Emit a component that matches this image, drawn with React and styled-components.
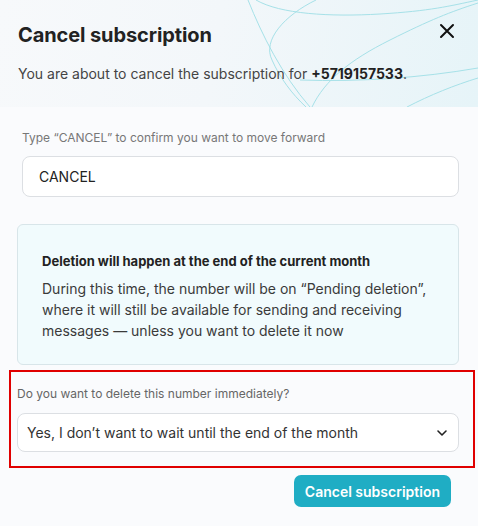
import React, { useState } from 'react'
import styled, { createGlobalStyle } from 'styled-components'

const GlobalStyle = createGlobalStyle`
	html, body {
		margin: 0;
		padding: 0;
		background: #fafbfd;
	}
	body {
		font-family: Inter, "Noto Sans", "Liberation Sans", sans-serif;
		color: #222;
	}
`

const Modal = styled.div`
	width: 478px;
	min-height: 526px;
	background: #fafbfd;
	display: flex;
	flex-direction: column;
`

const Header = styled.header`
	position: relative;
	height: 107px;
	box-sizing: border-box;
	padding: 21px 18px 0 18px;
	background: linear-gradient(100deg, #f7f9fb 0%, #f3f7fa 45%, #e6f4f8 100%);
	overflow: hidden;
`

const Waves = styled.svg`
	position: absolute;
	inset: 0;
	pointer-events: none;
`

const TitleRow = styled.div`
	position: relative;
	display: flex;
	justify-content: space-between;
	align-items: flex-start;
`

const Title = styled.h2`
	margin: 0;
	font-size: 20px;
	font-weight: 700;
	line-height: 28px;
	color: #222;
	letter-spacing: -0.1px;
`

const CloseButton = styled.button`
	border: 0;
	background: transparent;
	padding: 0;
	margin: 0 3px 0 0;
	width: 20px;
	height: 20px;
	cursor: pointer;
	display: flex;
	align-items: center;
	justify-content: center;
`

const Subtitle = styled.p`
	position: relative;
	margin: 15px 0 0 0;
	font-size: 14px;
	line-height: 20px;
	color: #444;

	strong {
		color: #222;
		font-weight: 700;
	}
`

const Body = styled.div`
	display: flex;
	flex-direction: column;
	padding: 23px 19px 0 17px;
`

const Field = styled.div`
	display: flex;
	flex-direction: column;
	gap: ${(p) => p.gap || 10}px;
	padding-left: ${(p) => p.indent || 0}px;
`

const Label = styled.label`
	font-size: 12px;
	line-height: 16px;
	color: ${(p) => p.tone || '#777'};
`

const TextInput = styled.input`
	box-sizing: border-box;
	height: 41px;
	width: 100%;
	border: 1px solid #dcdfe3;
	border-radius: 8px;
	background: #fff;
	padding: 0 16px;
	font-family: inherit;
	font-size: 14px;
	color: #222;
	outline: none;
`

const InfoBox = styled.div`
	margin-top: 27px;
	box-sizing: border-box;
	height: 141px;
	border: 1px solid #d8e5e9;
	border-radius: 6px;
	background: #f1fbfd;
	padding: 27px 24px 0 24px;
`

const InfoTitle = styled.h4`
	margin: 0 0 8px 0;
	font-size: 13px;
	line-height: 18px;
	font-weight: 700;
	color: #222;
`

const InfoText = styled.p`
	margin: 0;
	font-size: 14px;
	line-height: 21px;
	color: #3a3a3a;
`

const Highlight = styled.section`
	margin: 5px -16px 0 -8px;
	border: 2px solid #e00000;
	padding: 14px 14px 14px 6px;
	display: flex;
	flex-direction: column;
	gap: 11px;
`

const SelectWrap = styled.div`
	position: relative;
`

const Select = styled.select`
	appearance: none;
	box-sizing: border-box;
	width: 100%;
	height: 39px;
	border: 1px solid #dcdfe3;
	border-radius: 8px;
	background: #fff;
	padding: 0 36px 0 9px;
	font-family: inherit;
	font-size: 14px;
	color: #333;
	outline: none;
`

const Chevron = styled.svg`
	position: absolute;
	right: 11px;
	top: 50%;
	transform: translateY(-50%);
	pointer-events: none;
`

const Footer = styled.div`
	display: flex;
	justify-content: flex-end;
	padding: 7px 8px 0 0;
`

const PrimaryButton = styled.button`
	height: 32px;
	padding: 0 11px;
	border: 0;
	border-radius: 7px;
	background: #1fadc4;
	color: #fff;
	font-family: inherit;
	font-size: 14px;
	font-weight: 600;
	cursor: pointer;
`

export default function App() {
	const [confirm, setConfirm] = useState('CANCEL')
	const [now, setNow] = useState('yes')

	return (
		<>
			<GlobalStyle />
			<Modal>
				<Header>
					<Waves width="478" height="107" viewBox="0 0 478 107">
						<g fill="none" stroke="#a6e1e8" strokeWidth="1">
							<path d="M248 0 C 262 35, 282 75, 310 107" />
							<path d="M256 0 C 280 14, 330 17, 380 14 S 450 6, 478 0" />
							<path d="M316 0 C 285 15, 262 40, 272 60 C 280 78, 292 94, 306 107" />
							<path d="M312 107 C 325 80, 350 60, 390 40 S 450 12, 478 3" />
							<path d="M300 80 C 360 82, 420 78, 478 68" />
							<path d="M407 107 C 430 95, 455 85, 478 78" />
						</g>
					</Waves>
					<TitleRow>
						<Title>Cancel subscription</Title>
						<CloseButton aria-label="Close">
							<svg width="16" height="16" viewBox="0 0 16 16">
								<path d="M2 2 L14 14 M14 2 L2 14" stroke="#111" strokeWidth="2" strokeLinecap="round" />
							</svg>
						</CloseButton>
					</TitleRow>
					<Subtitle>
						You are about to cancel the subscription for <strong>+5719157533</strong>.
					</Subtitle>
				</Header>

				<Body>
					<Field indent={5} gap={10}>
						<Label>Type “CANCEL” to confirm you want to move forward</Label>
						<TextInput value={confirm} onChange={(e) => setConfirm(e.target.value)} />
					</Field>

					<InfoBox>
						<InfoTitle>Deletion will happen at the end of the current month</InfoTitle>
						<InfoText>
							During this time, the number will be on “Pending deletion”, where it will still be available for sending and receiving messages — unless you want to delete it now
						</InfoText>
					</InfoBox>

					<Highlight>
						<Label tone="#666">Do you want to delete this number immediately?</Label>
						<SelectWrap>
							<Select value={now} onChange={(e) => setNow(e.target.value)}>
								<option value="yes">Yes, I don’t want to wait until the end of the month</option>
								<option value="no">No, delete it at the end of the month</option>
							</Select>
							<Chevron width="12" height="8" viewBox="0 0 12 8">
								<path d="M2 2 L6 6 L10 2" fill="none" stroke="#222" strokeWidth="1.6" strokeLinecap="round" strokeLinejoin="round" />
							</Chevron>
						</SelectWrap>
					</Highlight>

					<Footer>
						<PrimaryButton>Cancel subscription</PrimaryButton>
					</Footer>
				</Body>
			</Modal>
		</>
	)
}
